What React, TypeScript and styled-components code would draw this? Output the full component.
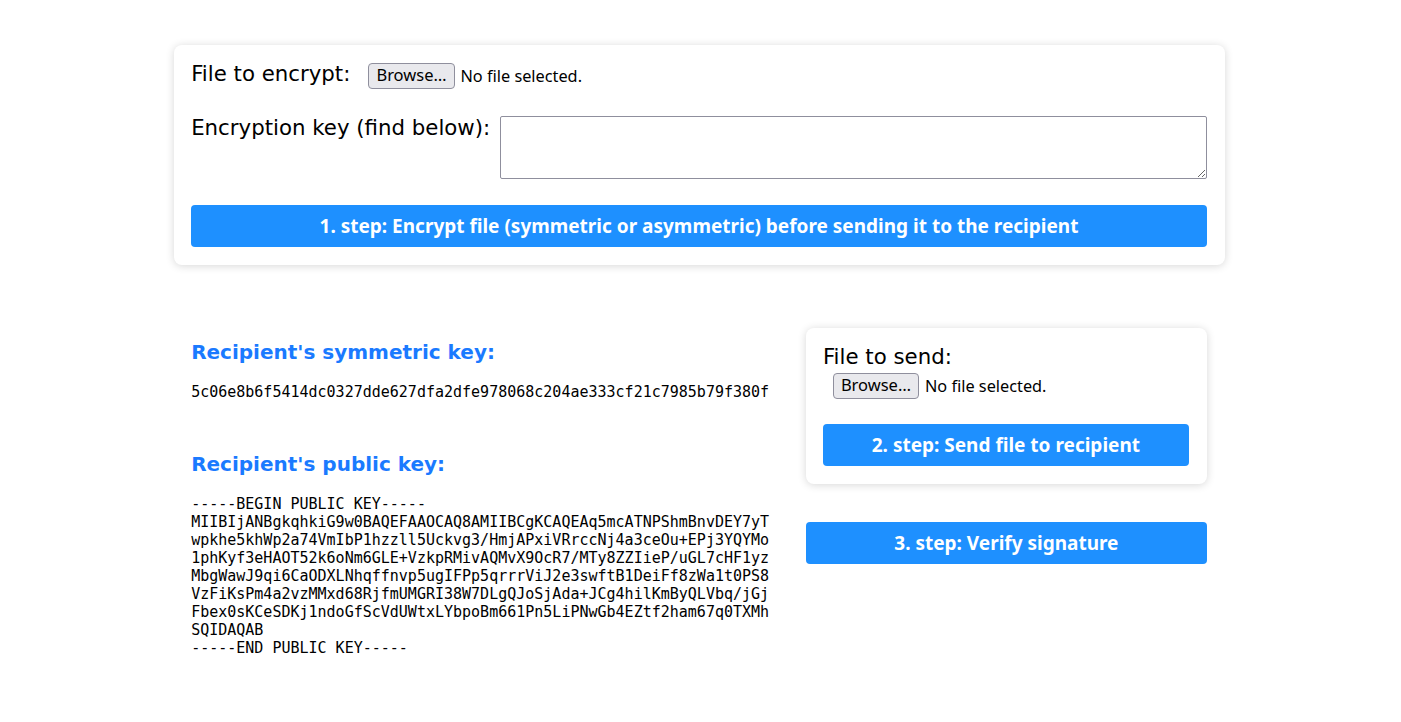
import React from 'react';
import styled, { createGlobalStyle } from 'styled-components';

const GlobalStyle = createGlobalStyle`
  html, body {
    margin: 0;
    padding: 0;
    background: #ffffff;
  }
  body {
    font-family: 'DejaVu Sans', sans-serif;
    color: #000000;
  }
`;

const symmetricKey = '5c06e8b6f5414dc0327dde627dfa2dfe978068c204ae333cf21c7985b79f380f';

const publicKey = `-----BEGIN PUBLIC KEY-----
MIIBIjANBgkqhkiG9w0BAQEFAAOCAQ8AMIIBCgKCAQEAq5mcATNPShmBnvDEY7yT
wpkhe5khWp2a74VmIbP1hzzll5Uckvg3/HmjAPxiVRrccNj4a3ceOu+EPj3YQYMo
1phKyf3eHAOT52k6oNm6GLE+VzkpRMivAQMvX9OcR7/MTy8ZZIieP/uGL7cHF1yz
MbgWawJ9qi6CaODXLNhqffnvp5ugIFPp5qrrrViJ2e3swftB1DeiFf8zWa1t0PS8
VzFiKsPm4a2vzMMxd68RjfmUMGRI38W7DLgQJoSjAda+JCg4hilKmByQLVbq/jGj
Fbex0sKCeSDKj1ndoGfScVdUWtxLYbpoBm661Pn5LiPNwGb4EZtf2ham67q0TXMh
SQIDAQAB
-----END PUBLIC KEY-----`;

const Page = styled.div`
  width: 75%;
  margin: 45px 0 0 calc(12.5% - 1px);
  padding-bottom: 40px;
`;

const Card = styled.div`
  background: #ffffff;
  border-radius: 8px;
  box-shadow: 0 1px 8px rgba(0, 0, 0, 0.16);
  padding: 17px 18px 18px 17px;
`;

const Row = styled.div<{ $gap: number; $mt?: number }>`
  display: flex;
  align-items: flex-start;
  gap: ${(p) => p.$gap}px;
  margin-top: ${(p) => p.$mt ?? 0}px;
`;

const Label = styled.label`
  font-family: 'DejaVu Sans', sans-serif;
  font-size: 21.3px;
  line-height: 24px;
  white-space: nowrap;
`;

const FileRow = styled.div<{ $indent?: number; $mt?: number }>`
  display: flex;
  align-items: center;
  gap: 6px;
  height: 27px;
  margin-left: ${(p) => p.$indent ?? 0}px;
  margin-top: ${(p) => p.$mt ?? 0}px;
`;

const BrowseButton = styled.button`
  height: 26px;
  padding: 0 7px;
  background: #e9e9ed;
  border: 1px solid #8f8f9d;
  border-radius: 4px;
  font-family: 'Noto Sans', sans-serif;
  font-size: 16.5px;
  color: #000000;
  line-height: 1;
`;

const FileName = styled.span`
  font-family: 'Noto Sans', sans-serif;
  font-size: 16.3px;
`;

const KeyInput = styled.textarea`
  flex: 1;
  height: 63px;
  box-sizing: border-box;
  border: 1px solid #8f8f9d;
  border-radius: 2px;
  padding: 2px;
  margin: 0;
  font-family: 'DejaVu Sans Mono', monospace;
  font-size: 13px;
`;

const StepButton = styled.button<{ $mt: number }>`
  display: block;
  width: 100%;
  height: 42px;
  margin-top: ${(p) => p.$mt}px;
  border: none;
  border-radius: 4px;
  background: #1e90ff;
  color: #ffffff;
  font-family: 'Noto Sans', sans-serif;
  font-weight: 700;
  font-size: 19px;
  cursor: pointer;
`;

const Lower = styled.div`
  display: grid;
  grid-template-columns: 1fr 401px;
  gap: 16px;
  padding: 0 18px 0 17px;
  margin-top: 63px;
`;

const KeyColumn = styled.div`
  padding-top: 13px;
`;

const KeyHeading = styled.h3<{ $mt?: number }>`
  margin: ${(p) => p.$mt ?? 0}px 0 0;
  font-family: 'DejaVu Sans', sans-serif;
  font-weight: 700;
  font-size: 20px;
  line-height: 23px;
  color: #1a7aff;
`;

const KeyText = styled.pre`
  margin: 19px 0 0;
  font-family: 'DejaVu Sans Mono', monospace;
  font-size: 15px;
  line-height: 18px;
  white-space: pre;
`;

const SideColumn = styled.div`
  display: flex;
  flex-direction: column;
`;

export default function App() {
  return (
    <>
      <GlobalStyle />
      <Page>
        <Card>
          <Row $gap={18}>
            <Label htmlFor="encrypt-file">File to encrypt:</Label>
            <FileRow>
              <BrowseButton id="encrypt-file">Browse…</BrowseButton>
              <FileName>No file selected.</FileName>
            </FileRow>
          </Row>
          <Row $gap={10} $mt={27}>
            <Label htmlFor="enc-key">Encryption key (find below):</Label>
            <KeyInput id="enc-key" />
          </Row>
          <StepButton $mt={26}>
            1. step: Encrypt file (symmetric or asymmetric) before sending it to the recipient
          </StepButton>
        </Card>

        <Lower>
          <KeyColumn>
            <KeyHeading>Recipient's symmetric key:</KeyHeading>
            <KeyText>{symmetricKey}</KeyText>
            <KeyHeading $mt={52}>Recipient's public key:</KeyHeading>
            <KeyText>{publicKey}</KeyText>
          </KeyColumn>
          <SideColumn>
            <Card>
              <Label htmlFor="send-file">File to send:</Label>
              <FileRow $indent={10} $mt={3}>
                <BrowseButton id="send-file">Browse…</BrowseButton>
                <FileName>No file selected.</FileName>
              </FileRow>
              <StepButton $mt={25}>2. step: Send file to recipient</StepButton>
            </Card>
            <StepButton $mt={38}>3. step: Verify signature</StepButton>
          </SideColumn>
        </Lower>
      </Page>
    </>
  );
}
